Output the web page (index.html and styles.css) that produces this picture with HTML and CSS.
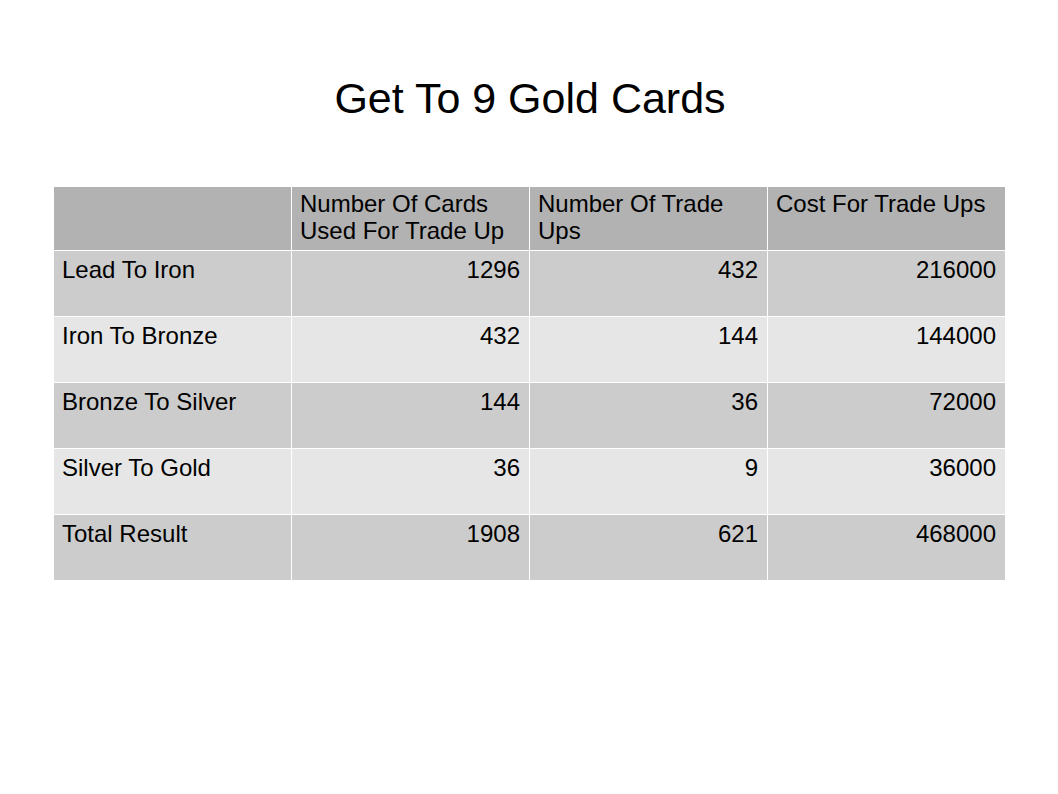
FILE: index.html
```html
<!DOCTYPE html>
<html>
<head>
<meta charset="utf-8">
<link rel="stylesheet" href="styles.css">
</head>
<body>
<div class="slide">
  <h1 class="title">Get To 9 Gold Cards</h1>
  <div class="table">
    <div class="cell head"></div>
    <div class="cell head">Number Of Cards Used For Trade Up</div>
    <div class="cell head">Number Of Trade Ups</div>
    <div class="cell head">Cost For Trade Ups</div>

    <div class="cell odd">Lead To Iron</div>
    <div class="cell odd num">1296</div>
    <div class="cell odd num">432</div>
    <div class="cell odd num">216000</div>

    <div class="cell even">Iron To Bronze</div>
    <div class="cell even num">432</div>
    <div class="cell even num">144</div>
    <div class="cell even num">144000</div>

    <div class="cell odd">Bronze To Silver</div>
    <div class="cell odd num">144</div>
    <div class="cell odd num">36</div>
    <div class="cell odd num">72000</div>

    <div class="cell even">Silver To Gold</div>
    <div class="cell even num">36</div>
    <div class="cell even num">9</div>
    <div class="cell even num">36000</div>

    <div class="cell odd">Total Result</div>
    <div class="cell odd num">1908</div>
    <div class="cell odd num">621</div>
    <div class="cell odd num">468000</div>
  </div>
</div>
</body>
</html>
```
FILE: styles.css
```css
html, body {
  margin: 0;
  padding: 0;
  background: #ffffff;
}
.slide {
  width: 1058px;
  height: 794px;
  font-family: "Liberation Sans", Arial, sans-serif;
  color: #000000;
  padding-top: 73px;
  box-sizing: border-box;
}
.title {
  margin: 0;
  font-size: 43px;
  font-weight: normal;
  text-align: center;
  line-height: 50px;
  padding-left: 2px;
}
.table {
  margin: 64px 0 0 54px;
  width: 951px;
  display: grid;
  grid-template-columns: repeat(4, 237px);
  grid-template-rows: 63px repeat(5, 65px);
  gap: 1px;
  background: #ffffff;
}
.cell {
  font-size: 24px;
  line-height: 27px;
  padding: 3px 9px 0 8px;
  box-sizing: border-box;
}
.head {
  background: #b2b2b2;
}
.odd {
  background: #cccccc;
  padding-top: 5px;
}
.even {
  background: #e6e6e6;
  padding-top: 5px;
}
.num {
  text-align: right;
}
```
